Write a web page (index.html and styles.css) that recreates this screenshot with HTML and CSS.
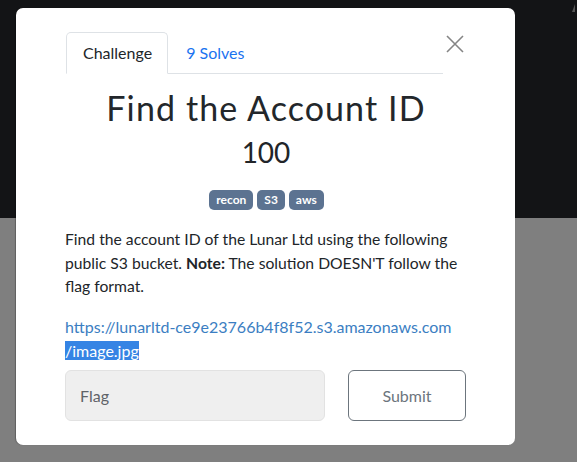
FILE: index.html
```html
<!DOCTYPE html>
<html>
<head>
<meta charset="utf-8">
<link rel="stylesheet" href="styles.css">
</head>
<body>
<div class="corner-mark"></div>
<div class="modal">
  <div class="tab-row">
    <ul class="tabs">
      <li class="tab active">Challenge</li>
      <li class="tab link">9 Solves</li>
    </ul>
    <button class="close" aria-label="Close">
      <svg width="18" height="18" viewBox="0 0 18 18"><path d="M1 1 L17 17 M17 1 L1 17" stroke="#858585" stroke-width="1.6" fill="none"/></svg>
    </button>
  </div>
  <h3 class="title">Find the Account ID</h3>
  <h4 class="value">100</h4>
  <div class="badges">
    <span class="badge">recon</span>
    <span class="badge">S3</span>
    <span class="badge">aws</span>
  </div>
  <p class="desc">Find the account ID of the Lunar Ltd using the following public S3 bucket. <b>Note:</b> The solution DOESN'T follow the flag format.</p>
  <p class="url"><a href="#">https://lunarltd-ce9e23766b4f8f52.s3.amazonaws.com<br><span class="sel">/image.jpg</span></a></p>
  <form class="submit-row">
    <input class="flag" type="text" placeholder="Flag">
    <button class="submit" type="button">Submit</button>
  </form>
</div>
</body>
</html>
```
FILE: styles.css
```css
html, body {
  margin: 0;
  padding: 0;
}
body {
  width: 577px;
  height: 462px;
  overflow: hidden;
  background: linear-gradient(to bottom, #131416 0, #131416 218px, #7f7f7f 218px, #7f7f7f 100%);
  font-family: Lato, "Noto Sans", sans-serif;
  color: #212529;
  padding-top: 8px;
  box-sizing: border-box;
  position: relative;
}
.corner-mark {
  position: absolute;
  right: 2px;
  top: 4px;
  width: 0;
  height: 0;
  border-left: 3px solid transparent;
  border-bottom: 8px solid #555;
}
.modal {
  margin-left: 16px;
  width: 499px;
  height: 437px;
  background: #fff;
  border-radius: 7px;
  box-sizing: border-box;
  padding: 24px 49px 0 50px;
  box-shadow: -1px 0 1px rgba(0,0,0,0.25);
}
.tab-row {
  display: flex;
  align-items: flex-start;
}
.tabs {
  list-style: none;
  margin: 0;
  padding: 0;
  display: flex;
  width: 377px;
  border-bottom: 1px solid #dee2e6;
}
.tab {
  font-size: 16px;
  line-height: 24px;
  padding: 8px 16px 8px 16px;
  border: 1px solid transparent;
  border-top-left-radius: 5px;
  border-top-right-radius: 5px;
  margin-bottom: -1px;
}
.tab.active {
  border-color: #dee2e6 #dee2e6 #fff;
  color: #212529;
  background: #fff;
  padding-right: 15px;
}
.tab.link {
  color: #1a73f0;
  padding-left: 17px;
}
.close {
  margin-left: 3px;
  margin-top: 3px;
  padding: 0;
  border: 0;
  background: none;
  width: 18px;
  height: 18px;
  display: flex;
}
.title {
  margin: 13px 0 0 0;
  text-align: center;
  font-size: 34px;
  font-weight: 400;
  letter-spacing: 1.1px;
  line-height: 42px;
  color: #23272b;
}
.value {
  margin: 6px 0 0 0;
  text-align: center;
  font-size: 28px;
  font-weight: 400;
  line-height: 34px;
  color: #212529;
}
.badges {
  display: flex;
  justify-content: center;
  gap: 4px;
  margin-top: 21px;
  padding-left: 1px;
}
.badge {
  background: #5c7391;
  color: #fff;
  font-size: 12px;
  font-weight: 700;
  line-height: 20px;
  height: 20px;
  padding: 0 7px;
  border-radius: 5px;
}
.desc {
  margin: 18px 0 0 -1px;
  font-size: 15.7px;
  line-height: 23.5px;
}
.url {
  margin: 16px 0 0 -1px;
  font-size: 16px;
  line-height: 24px;
}
.url a {
  color: #3b7ec2;
  text-decoration: none;
}
.sel {
  background: #3584e4;
  color: #fff;
}
.submit-row {
  display: flex;
  justify-content: space-between;
  margin-top: 7px;
  margin-left: -1px;
}
.flag {
  width: 260px;
  height: 51px;
  box-sizing: border-box;
  background: #efefef;
  border: 1px solid #e2e2e2;
  border-radius: 6px;
  padding: 0 14px;
  font-family: Lato, sans-serif;
  font-size: 16px;
  outline: none;
}
.flag::placeholder {
  color: #5f6368;
}
.submit {
  width: 118px;
  height: 51px;
  box-sizing: border-box;
  background: #fff;
  border: 1px solid #6c757d;
  border-radius: 6px;
  font-family: Lato, sans-serif;
  font-size: 16px;
  color: #6c757d;
}
```
